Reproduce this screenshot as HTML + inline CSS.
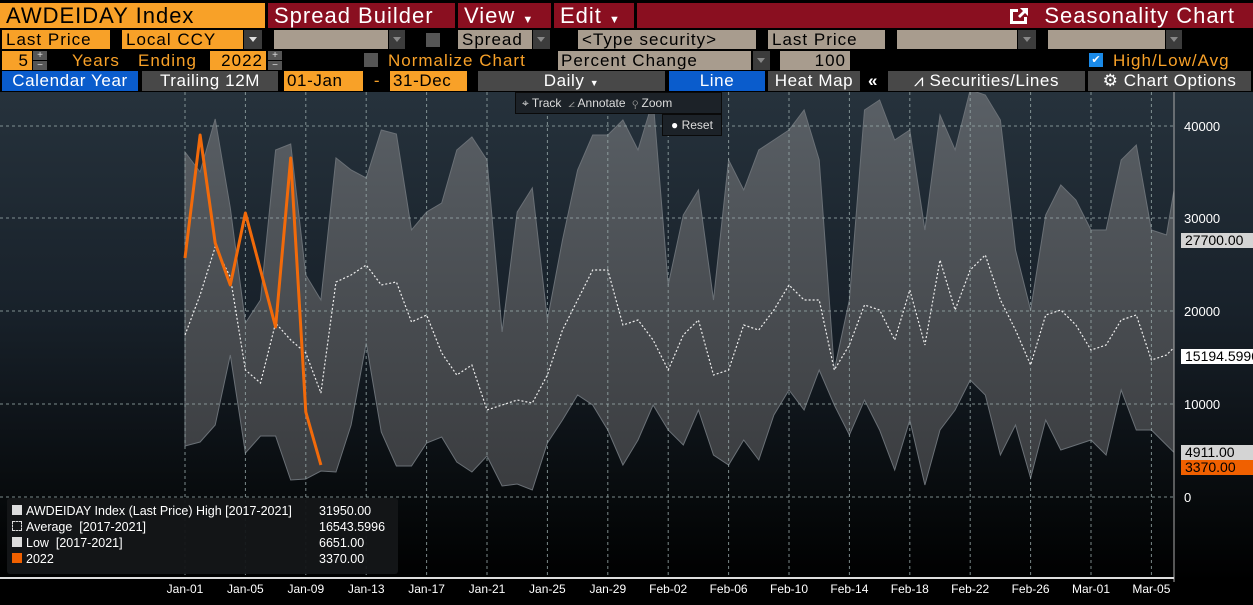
<!DOCTYPE html>
<html><head><meta charset="utf-8">
<style>
*{margin:0;padding:0;box-sizing:border-box}
body{width:1253px;height:605px;background:#000;position:relative;overflow:hidden;font-family:"Liberation Sans",sans-serif}
.b{position:absolute;white-space:nowrap;overflow:hidden}
.or{background:#f8a128;color:#000}
.rd{background:#8a0f20;color:#fff}
.tn{background:#a89c8e;color:#000}
.dd{background:#3c3c3c}
.gy{background:#484848;color:#fff;text-align:center}
.bl{background:#0a5ccc;color:#fff;text-align:center}
.r1{top:3px;height:25px;font-size:22px;line-height:25px;padding-left:6px;letter-spacing:1px}
.r2{top:30px;height:19px;font-size:17px;line-height:19px;padding-left:4px;letter-spacing:1px}
.r3{top:51px;height:19px;font-size:17px;line-height:19px;letter-spacing:1px}
.r4{top:71px;height:20px;font-size:17px;line-height:20px;letter-spacing:0.6px}
.arr{position:absolute;width:0;height:0;border-left:4px solid transparent;border-right:4px solid transparent;border-top:5px solid #ddd}
.ot{color:#f8a128;position:absolute;font-size:17px;line-height:19px;top:51px;letter-spacing:1px}
.pm{position:absolute;width:14px;height:9px;background:#555;color:#ddd;font-size:10px;line-height:9px;text-align:center}
.chk{position:absolute;width:14px;height:14px;background:#555}
.ax{position:absolute;left:1184px;color:#fff;font-size:13px}
.tag{position:absolute;left:1181px;height:15px;font-size:14px;line-height:15px;padding-left:4px;width:72px;overflow:hidden;white-space:nowrap}
.xl{position:absolute;top:582px;color:#fff;font-size:12px;width:60px;text-align:center}
.tb{position:absolute;background:#1c2228;border:1px solid #0a0a0a;color:#ddd;font-size:12px;line-height:20px}
</style></head><body>
<div class="b or r1" style="left:0;width:265px">AWDEIDAY Index</div>
<div class="b rd r1" style="left:268px;width:187px">Spread Builder</div>
<div class="b rd r1" style="left:458px;width:93px">View <span style="font-size:11px">▼</span></div>
<div class="b rd r1" style="left:554px;width:80px">Edit <span style="font-size:11px">▼</span></div>
<div class="b rd r1" style="left:637px;width:616px;text-align:right;padding-right:18px">
<svg width="22" height="20" viewBox="0 0 22 20" style="vertical-align:-3px;margin-right:14px"><path d="M2 3h8v3H5v9h11v-4h3v7H2z" fill="#fff"/><path d="M12 2h8v8l-3-3-5 5-2-2 5-5z" fill="#fff"/></svg>Seasonality Chart</div>
<div class="b or r2" style="left:2px;width:108px">Last Price</div>
<div class="b or r2" style="left:122px;width:121px">Local CCY</div>
<div class="b dd r2" style="left:244px;width:18px"><i class="arr" style="left:5px;top:7px"></i></div>
<div class="b tn r2" style="left:274px;width:114px"></div>
<div class="b dd r2" style="left:389px;width:16px"><i class="arr" style="left:4px;top:7px;border-top-color:#888"></i></div>
<div class="chk" style="left:426px;top:33px"></div>
<div class="b tn r2" style="left:458px;width:74px">Spread</div>
<div class="b dd r2" style="left:533px;width:17px"><i class="arr" style="left:4px;top:7px;border-top-color:#888"></i></div>
<div class="b tn r2" style="left:578px;width:178px;padding-left:4px">&lt;Type security&gt;</div>
<div class="b tn r2" style="left:768px;width:117px">Last Price</div>
<div class="b tn r2" style="left:897px;width:120px"></div>
<div class="b dd r2" style="left:1018px;width:18px"><i class="arr" style="left:5px;top:7px;border-top-color:#888"></i></div>
<div class="b tn r2" style="left:1048px;width:117px"></div>
<div class="b dd r2" style="left:1166px;width:16px"><i class="arr" style="left:4px;top:7px;border-top-color:#888"></i></div>
<div class="b or r3" style="left:2px;width:30px;text-align:right;padding-right:3px">5</div>
<div class="pm" style="left:33px;top:51px">+</div><div class="pm" style="left:33px;top:61px">−</div>
<div class="ot" style="left:72px">Years</div><div class="ot" style="left:138px">Ending</div>
<div class="b or r3" style="left:210px;width:56px;text-align:right;padding-right:3px">2022</div>
<div class="pm" style="left:268px;top:51px">+</div><div class="pm" style="left:268px;top:61px">−</div>
<div class="chk" style="left:364px;top:53px"></div>
<div class="ot" style="left:388px">Normalize Chart</div>
<div class="b tn r3" style="left:558px;width:193px;padding-left:3px">Percent Change</div>
<div class="b dd r3" style="left:753px;width:17px"><i class="arr" style="left:4px;top:7px;border-top-color:#888"></i></div>
<div class="b tn r3" style="left:780px;width:70px;text-align:right;padding-right:4px">100</div>
<div class="chk" style="left:1089px;top:53px;background:#1a8ae8;color:#fff;font-size:11px;line-height:14px;text-align:center">✔</div>
<div class="ot" style="left:1113px">High/Low/Avg</div>
<div class="b bl r4" style="left:2px;width:136px">Calendar Year</div>
<div class="b gy r4" style="left:142px;width:136px">Trailing 12M</div>
<div class="b or r4" style="left:284px;width:79px;padding-left:3px">01-Jan</div>
<div class="b r4" style="left:368px;width:18px;color:#f8a128;text-align:center">-</div>
<div class="b or r4" style="left:390px;width:77px;padding-left:3px">31-Dec</div>
<div class="b gy r4" style="left:478px;width:187px">Daily <span style="font-size:9px">▼</span></div>
<div class="b bl r4" style="left:669px;width:96px">Line</div>
<div class="b gy r4" style="left:768px;width:92px">Heat Map</div>
<div class="b r4" style="left:868px;width:18px;color:#fff;font-weight:bold">«</div>
<div class="b gy r4" style="left:888px;width:197px">⩘ Securities/Lines</div>
<div class="b gy r4" style="left:1088px;width:163px">⚙ Chart Options</div>
<svg class="b" style="left:0;top:92px" width="1253" height="513">
<defs>
<linearGradient id="bg" x1="0" y1="0" x2="0" y2="1"><stop offset="0" stop-color="#26323c"/><stop offset="0.45" stop-color="#18212a"/><stop offset="0.9" stop-color="#040607"/><stop offset="1" stop-color="#000"/></linearGradient>
<linearGradient id="bd" x1="0" y1="0" x2="0" y2="1"><stop offset="0" stop-color="#5a6066"/><stop offset="1" stop-color="#3a3c3f"/></linearGradient>
<clipPath id="cp"><rect x="0" y="0" width="1174" height="490"/></clipPath>
</defs>
<rect width="1253" height="490" fill="url(#bg)"/>
<g id="plot" clip-path="url(#cp)"></g>
<line x1="1174" y1="0" x2="1174" y2="490" stroke="#aaa"/>
<line x1="0" y1="486" x2="1174" y2="486" stroke="#ddd" stroke-width="2"/>
</svg>
<div class="ax" style="top:119px">40000</div>
<div class="ax" style="top:211px">30000</div>
<div class="ax" style="top:304px">20000</div>
<div class="ax" style="top:397px">10000</div>
<div class="ax" style="top:490px">0</div>
<div class="tag" style="top:233px;background:#d4d4d4;color:#000">27700.00</div>
<div class="tag" style="top:349px;background:#fff;color:#000">15194.5996</div>
<div class="tag" style="top:445px;background:#d4d4d4;color:#000">4911.00</div>
<div class="tag" style="top:460px;background:#f06000;color:#000">3370.00</div>
<div class="tb" style="left:515px;top:92px;width:207px;height:22px;padding-left:6px">⌖ Track &nbsp;<span style="color:#999">∠</span> Annotate &nbsp;<span style="color:#999">⚲</span> Zoom</div>
<div class="tb" style="left:662px;top:114px;width:60px;height:22px;padding-left:8px"><b style="color:#fff">●</b> Reset</div>
<div class="b" style="left:7px;top:498px;width:391px;height:76px;background:rgba(20,22,24,0.95);border-radius:3px;color:#fff;font-size:12.5px;line-height:16px;padding:5px 5px">
<div><span style="display:inline-block;width:10px;height:10px;background:#ddd;margin-right:4px"></span>AWDEIDAY Index (Last Price) High [2017-2021]<span style="position:absolute;left:312px">31950.00</span></div>
<div><span style="display:inline-block;width:10px;height:10px;border:1px dashed #ddd;margin-right:4px"></span>Average &nbsp;[2017-2021]<span style="position:absolute;left:312px">16543.5996</span></div>
<div><span style="display:inline-block;width:10px;height:10px;background:#ddd;margin-right:4px"></span>Low &nbsp;[2017-2021]<span style="position:absolute;left:312px">6651.00</span></div>
<div><span style="display:inline-block;width:10px;height:10px;background:#f06000;margin-right:4px"></span>2022<span style="position:absolute;left:312px">3370.00</span></div>
</div>
<div id="xl"></div>
<script>
var H=[152,172,119,208,323,300,150,144,275,300,158,170,178,130,134,230,212,203,150,137,160,332,212,188,320,240,170,135,135,120,150,100,285,215,190,300,160,190,150,140,130,110,160,370,300,110,100,140,130,230,115,150,90,95,120,250,310,215,185,200,230,230,160,145,230,235,145];
var L=[446,442,425,355,453,436,436,480,479,471,472,425,343,432,466,466,443,437,462,472,456,486,484,490,443,420,395,405,430,465,440,405,430,445,410,455,465,440,460,415,390,410,370,405,435,400,430,470,420,485,430,410,380,395,455,425,478,420,450,445,440,455,390,430,430,445,460];
var A=[335,295,247,277,370,383,323,340,353,393,282,275,265,285,282,322,315,353,375,365,410,405,400,403,375,330,300,270,270,325,320,340,370,335,320,375,370,325,330,310,285,300,300,370,345,305,310,340,290,345,260,310,270,255,300,330,365,315,310,325,350,345,320,315,360,355,340];
var O=[258,135,243,285,213,270,327,158,412,465];
function X(i){return 185+i*15.1}
function pts(a){return a.map(function(y,i){return X(i).toFixed(1)+','+(y-92)}).join(' ')}
var s='';
var hp=pts(H), lp=L.map(function(y,i){return X(i).toFixed(1)+','+(y-92)}).reverse().join(' ');
s+='<polygon points="'+hp+' '+lp+'" fill="url(#bd)" stroke="#6a7076" stroke-width="1"/>';
for(var i=0;i<17;i++){var x=X(i*4);s+='<line x1="'+x+'" y1="0" x2="'+x+'" y2="486" stroke="#9aa" stroke-width="1" stroke-dasharray="3,3" opacity="0.8"/>';}
[126,218,311,404,497].forEach(function(y){s+='<line x1="0" y1="'+(y-92)+'" x2="1174" y2="'+(y-92)+'" stroke="#9aa" stroke-dasharray="3,3" opacity="0.8"/>';});
s+='<polyline points="'+pts(A)+'" fill="none" stroke="#eee" stroke-width="1.2" stroke-dasharray="2,2"/>';
s+='<polyline points="'+pts(O)+'" fill="none" stroke="#f26a0a" stroke-width="3" stroke-linejoin="round"/>';
document.getElementById('plot').innerHTML=s;
var n=['Jan-01','Jan-05','Jan-09','Jan-13','Jan-17','Jan-21','Jan-25','Jan-29','Feb-02','Feb-06','Feb-10','Feb-14','Feb-18','Feb-22','Feb-26','Mar-01','Mar-05'];
var h='';n.forEach(function(t,i){h+='<div class="xl" style="left:'+(X(i*4)-30)+'px">'+t+'</div>';});
document.getElementById('xl').innerHTML=h;
</script>
</body></html>
